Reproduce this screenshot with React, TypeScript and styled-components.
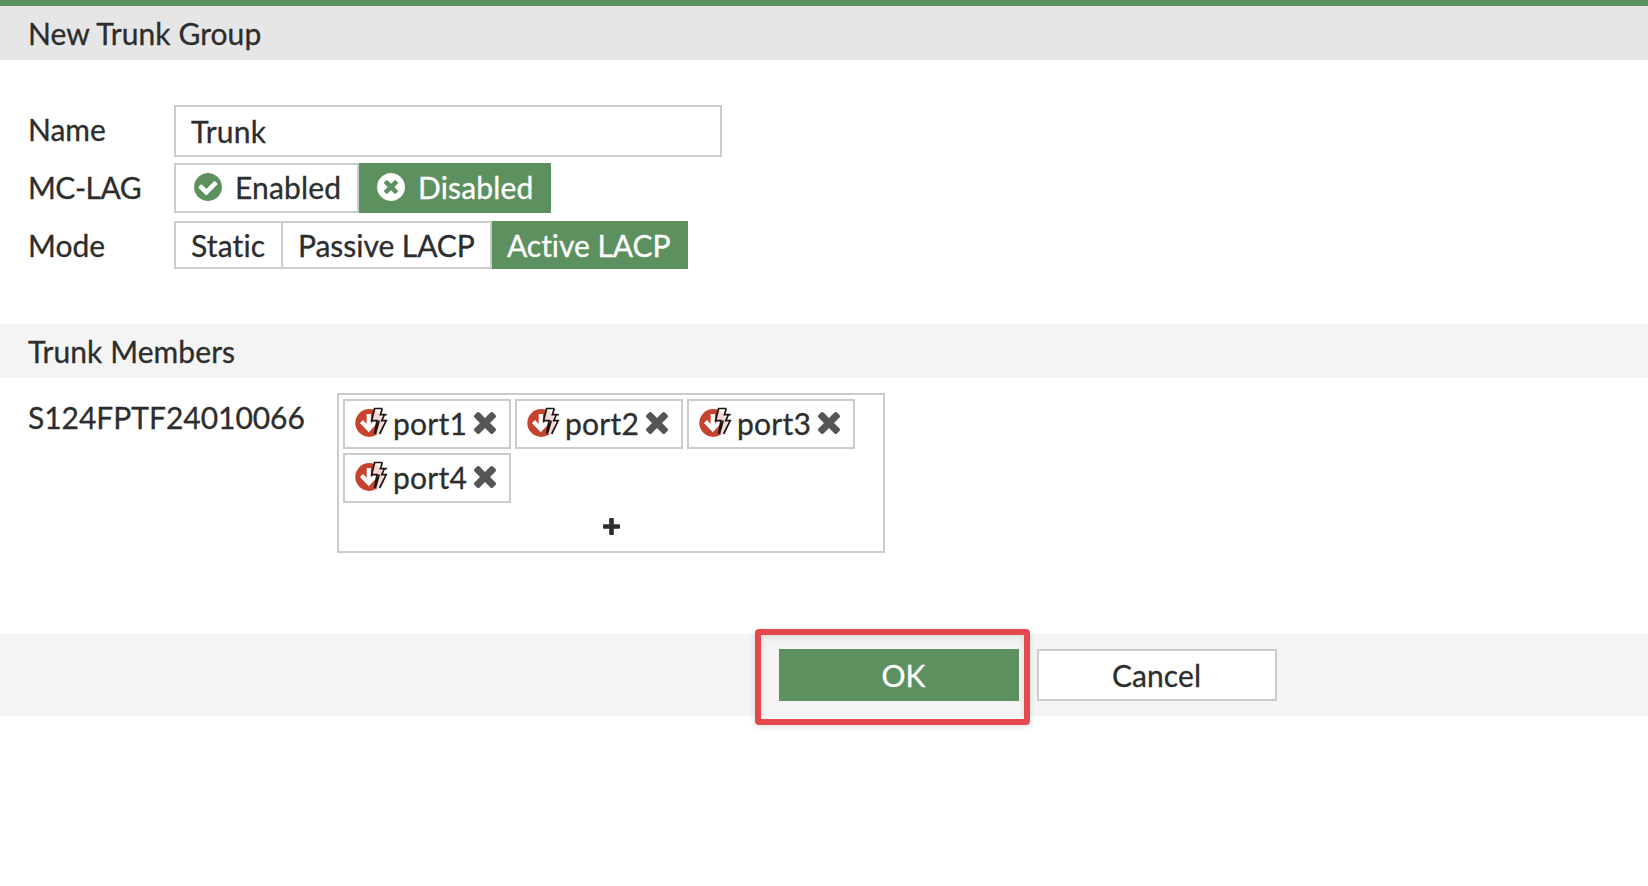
import React from "react";
import styled, { createGlobalStyle } from "styled-components";

const GlobalStyle = createGlobalStyle`
  *, *::before, *::after { box-sizing: border-box; }
  html, body { margin: 0; padding: 0; background: #fff; }
  body, button, input {
    font-family: Lato, sans-serif;
    font-size: 30px;
    color: #2d2d2d;
    font-variant-ligatures: none;
    letter-spacing: 0.08px;
    -webkit-text-stroke: 0.3px currentColor;
  }
`;

const GREEN = "#5c915f";
const LINE = "#cccccc";

const Page = styled.div`
  min-height: 886px;
  line-height: 36px;
  border-top: 6px solid ${GREEN};
`;

const Heading = styled.h1<{ $tone: string }>`
  margin: 0;
  height: 54px;
  padding: 9px 28px 0;
  font-size: inherit;
  font-weight: 400;
  background: ${(p) => p.$tone};
`;

const Fields = styled.div`
  display: flex;
  flex-direction: column;
  padding: 45px 28px 55px;
`;

const Field = styled.div<{ $gap: number }>`
  display: flex;
  margin-bottom: ${(p) => p.$gap}px;
`;

const Label = styled.label<{ $width?: number; $tracking?: number }>`
  flex: none;
  width: ${(p) => p.$width ?? 146}px;
  padding-top: 6px;
  letter-spacing: ${(p) => p.$tracking ?? 0}px;
`;

const TextInput = styled.input`
  width: 548px;
  height: 52px;
  padding: 0 15px;
  letter-spacing: 0.25px;
  border: 2px solid ${LINE};
  border-radius: 0;
  outline: none;
  background: #fff;
`;

const Segments = styled.div`
  display: flex;
`;

const Segment = styled.button<{ $width: number; $height: number; $active?: boolean; $first?: boolean; $tracking?: number }>`
  display: flex;
  align-items: center;
  justify-content: flex-start;
  gap: 13px;
  width: ${(p) => p.$width}px;
  height: ${(p) => p.$height}px;
  padding: 0 0 0 15px;
  line-height: 36px;
  white-space: nowrap;
  letter-spacing: ${(p) => p.$tracking ?? 0.15}px;
  border: 2px solid ${(p) => (p.$active ? GREEN : LINE)};
  border-left-width: ${(p) => (p.$first ? 2 : 0)}px;
  background: ${(p) => (p.$active ? GREEN : "#fff")};
  color: ${(p) => (p.$active ? "#fff" : "#2d2d2d")};
`;

const ToggleText = styled.span`
  margin-top: -2px;
`;

const Glyph = styled.svg<{ $size: number }>`
  display: block;
  flex: none;
  width: ${(p) => p.$size}px;
  height: ${(p) => p.$size}px;
  fill: currentColor;
`;

const StatusGlyph = styled(Glyph)<{ $tint: string }>`
  color: ${(p) => p.$tint};
  margin: -2px 0 0 3px;
`;

const Members = styled.div`
  display: flex;
  padding: 15px 28px 0;
  height: 256px;
`;

const Picker = styled.div`
  display: flex;
  flex-direction: column;
  width: 548px;
  height: 160px;
  padding: 4px;
  border: 2px solid ${LINE};
`;

const Chips = styled.div`
  display: flex;
  flex-wrap: wrap;
  gap: 4px;
`;

const Chip = styled.div`
  display: flex;
  align-items: center;
  width: 168px;
  height: 50px;
  padding-left: 10px;
  border: 2px solid ${LINE};
`;

const PortIcon = styled.svg`
  display: block;
  flex: none;
  width: 34px;
  height: 32px;
  margin-top: -4px;
`;

const ChipText = styled.span`
  width: 73px;
  margin: -2px 8px 0 4px;
  letter-spacing: 0.25px;
`;

const Remove = styled.button`
  padding: 0;
  margin-top: -2px;
  border: 0;
  background: none;
  color: #555;
`;

const Add = styled.button`
  display: flex;
  justify-content: center;
  padding: 15px 0 0;
  border: 0;
  background: none;
`;

const Footer = styled.footer`
  display: flex;
  gap: 18px;
  height: 82px;
  padding: 15px 0 0 779px;
  background: #f4f4f4;
`;

const Action = styled.button<{ $primary?: boolean }>`
  width: 240px;
  height: 52px;
  padding: ${(p) => (p.$primary ? "0 0 0 9px" : "0 1px 0 0")};
  line-height: 36px;
  border: 2px solid ${(p) => (p.$primary ? GREEN : LINE)};
  background: ${(p) => (p.$primary ? GREEN : "#fff")};
  color: ${(p) => (p.$primary ? "#fff" : "#2d2d2d")};
`;

const Highlighted = styled.div`
  position: relative;
  height: 52px;
`;

const Marker = styled.div`
  position: absolute;
  left: -24px;
  top: -20px;
  width: 275px;
  height: 96px;
  border: 6px solid #e5484d;
  border-radius: 4px;
  box-shadow: 0 2px 6px rgba(0, 0, 0, 0.12), inset 0 2px 6px rgba(0, 0, 0, 0.12);
  pointer-events: none;
`;

const DISC =
  "q0 209-103 385.500t-279.500 279.500-385.500 103-385.500-103-279.500-279.500-103-385.500 103-385.500 279.500-279.500 385.500-103 385.500 103 279.500 279.500 103 385.500z";

const CHECK_CIRCLE =
  "M1412 734q0-28-18-46l-91-90q-19-19-45-19t-45 19l-408 407-226-226q-19-19-45-19t-45 19l-91 90q-18 18-18 46 0 27 18 45l362 362q19 19 45 19 27 0 46-19l543-543q18-18 18-45zm252 162" +
  DISC;

const TIMES_CIRCLE =
  "M1277 1122q0-26-19-45l-181-181 181-181q19-19 19-45 0-27-19-46l-90-90q-19-19-46-19-26 0-45 19l-181 181-181-181q-19-19-45-19-27 0-46 19l-90 90q-19 19-19 46 0 26 19 45l181 181-181 181q-19 19-19 45 0 27 19 46l90 90q19 19 46 19 26 0 45-19l181-181 181 181q19 19 45 19 27 0 46-19l90-90q19-19 19-46zm387-226" +
  DISC;

const TIMES =
  "M1490 1322q0 40-28 68l-136 136q-28 28-68 28t-68-28l-294-294-294 294q-28 28-68 28t-68-28l-136-136q-28-28-28-68t28-68l294-294-294-294q-28-28-28-68t28-68l136-136q28-28 68-28t68 28l294 294 294-294q28-28 68-28t68 28l136 136q28 28 28 68t-28 68l-294 294 294 294q28 28 28 68z";

const PLUS =
  "M1600 736v192q0 40-28 68t-68 28h-416v416q0 40-28 68t-68 28h-192q-40 0-68-28t-28-68v-416h-416q-40 0-68-28t-28-68v-192q0-40 28-68t68-28h416v-416q0-40 28-68t68-28h192q40 0 68 28t28 68v416h416q40 0 68 28t28 68z";

const PortDown = () => (
  <PortIcon viewBox="0 0 34 32">
    <circle cx="14.2" cy="17" r="13.9" fill="#c5432f" />
    <path d="M13.800 8V22M6.500 15.500L13.800 23.200L21 15.500" fill="none" stroke="#fff" strokeWidth="4.200" />
    <path
      d="M19.600 2.500H27.300L25.600 8.500H31.500L29 14.300H31L24.500 28L19.800 27.500L21.800 15H16.500Z"
      fill="#fff"
      fillOpacity="0.8"
    />
    <path
      d="M27.300 2.500H19.600L16.600 14.600H22L19.600 28M27.300 2.500L25.400 8.700H31.800M29.200 9L26.800 14.600H31.200L24.600 28M24.200 14.500L20.500 27.500"
      fill="none"
      stroke="#1c1414"
      strokeWidth="1.700"
    />
  </PortIcon>
);

const ports = ["port1", "port2", "port3", "port4"];

export default function App() {
  return (
    <>
      <GlobalStyle />
      <Page>
        <Heading $tone="#e6e6e6">New Trunk Group</Heading>
        <Fields>
          <Field $gap={6}>
            <Label>Name</Label>
            <TextInput defaultValue="Trunk" />
          </Field>
          <Field $gap={8}>
            <Label $tracking={-0.5}>MC-LAG</Label>
            <Segments>
              <Segment $width={185} $height={50} $first>
                <StatusGlyph $size={28} $tint={GREEN} viewBox="128 128 1536 1536">
                  <path d={CHECK_CIRCLE} />
                </StatusGlyph>
                <ToggleText>Enabled</ToggleText>
              </Segment>
              <Segment $width={192} $height={50} $active>
                <StatusGlyph $size={28} $tint="#fff" viewBox="128 128 1536 1536">
                  <path d={TIMES_CIRCLE} />
                </StatusGlyph>
                <ToggleText>Disabled</ToggleText>
              </Segment>
            </Segments>
          </Field>
          <Field $gap={0}>
            <Label>Mode</Label>
            <Segments>
              <Segment $width={109} $height={48} $first>Static</Segment>
              <Segment $width={209} $height={48} $tracking={-0.05}>Passive LACP</Segment>
              <Segment $width={196} $height={48} $tracking={-0.05} $active>Active LACP</Segment>
            </Segments>
          </Field>
        </Fields>
        <Heading as="h2" $tone="#f4f4f4">Trunk Members</Heading>
        <Members>
          <Label $width={309} $tracking={-0.03}>S124FPTF24010066</Label>
          <Picker>
            <Chips>
              {ports.map((port) => (
                <Chip key={port}>
                  <PortDown />
                  <ChipText>{port}</ChipText>
                  <Remove aria-label={`Remove ${port}`}>
                    <Glyph $size={22} viewBox="302 366 1188 1188">
                      <path d={TIMES} />
                    </Glyph>
                  </Remove>
                </Chip>
              ))}
            </Chips>
            <Add aria-label="Add member">
              <Glyph $size={17} viewBox="192 128 1408 1408">
                <path d={PLUS} />
              </Glyph>
            </Add>
          </Picker>
        </Members>
        <Footer>
          <Highlighted>
            <Action $primary>OK</Action>
            <Marker />
          </Highlighted>
          <Action>Cancel</Action>
        </Footer>
      </Page>
    </>
  );
}
